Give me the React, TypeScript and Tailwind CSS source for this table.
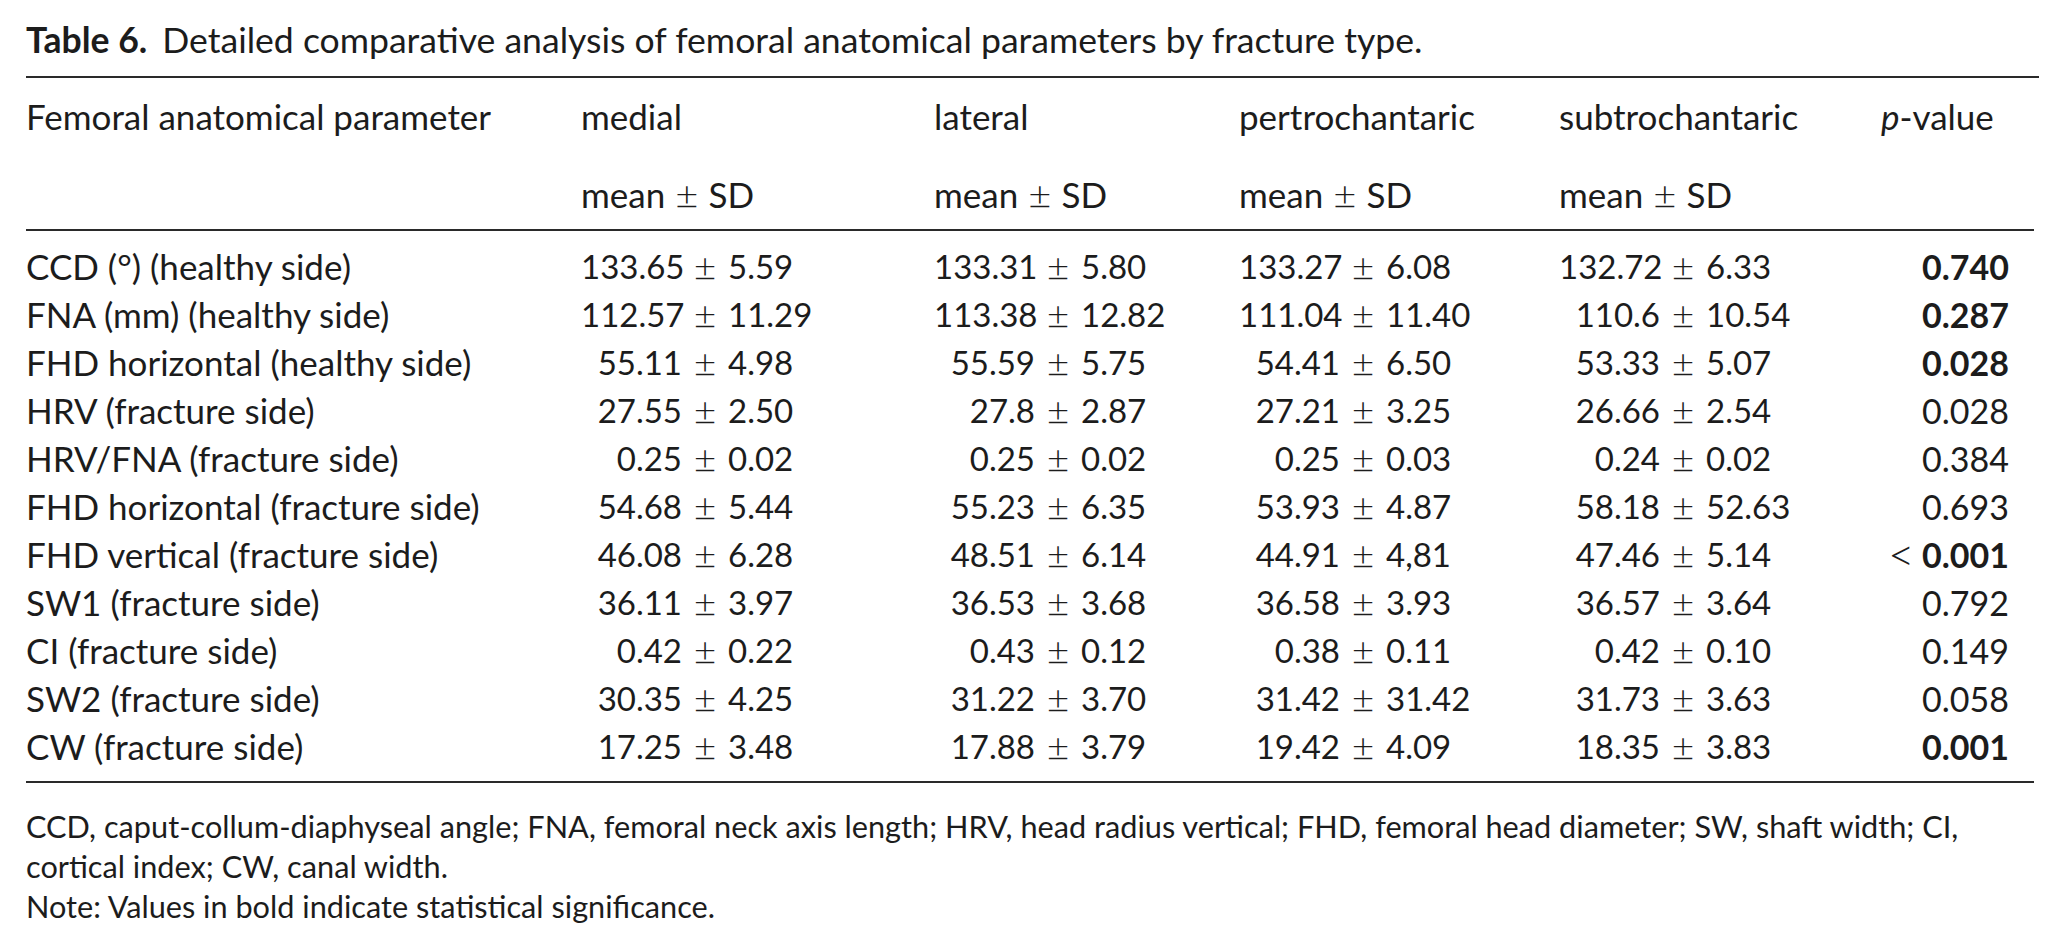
import React from "react";

type Row = {
  label: string;
  vals: [string, string][];
  p: string;
  bold?: boolean;
  lt?: boolean;
};

const rows: Row[] = [
  { label: "CCD (°) (healthy side)", vals: [["133.65", "5.59"], ["133.31", "5.80"], ["133.27", "6.08"], ["132.72", "6.33"]], p: "0.740", bold: true },
  { label: "FNA (mm) (healthy side)", vals: [["112.57", "11.29"], ["113.38", "12.82"], ["111.04", "11.40"], ["110.6", "10.54"]], p: "0.287", bold: true },
  { label: "FHD horizontal (healthy side)", vals: [["55.11", "4.98"], ["55.59", "5.75"], ["54.41", "6.50"], ["53.33", "5.07"]], p: "0.028", bold: true },
  { label: "HRV (fracture side)", vals: [["27.55", "2.50"], ["27.8", "2.87"], ["27.21", "3.25"], ["26.66", "2.54"]], p: "0.028" },
  { label: "HRV/FNA (fracture side)", vals: [["0.25", "0.02"], ["0.25", "0.02"], ["0.25", "0.03"], ["0.24", "0.02"]], p: "0.384" },
  { label: "FHD horizontal (fracture side)", vals: [["54.68", "5.44"], ["55.23", "6.35"], ["53.93", "4.87"], ["58.18", "52.63"]], p: "0.693" },
  { label: "FHD vertical (fracture side)", vals: [["46.08", "6.28"], ["48.51", "6.14"], ["44.91", "4,81"], ["47.46", "5.14"]], p: "0.001", bold: true, lt: true },
  { label: "SW1 (fracture side)", vals: [["36.11", "3.97"], ["36.53", "3.68"], ["36.58", "3.93"], ["36.57", "3.64"]], p: "0.792" },
  { label: "CI (fracture side)", vals: [["0.42", "0.22"], ["0.43", "0.12"], ["0.38", "0.11"], ["0.42", "0.10"]], p: "0.149" },
  { label: "SW2 (fracture side)", vals: [["30.35", "4.25"], ["31.22", "3.70"], ["31.42", "31.42"], ["31.73", "3.63"]], p: "0.058" },
  { label: "CW (fracture side)", vals: [["17.25", "3.48"], ["17.88", "3.79"], ["19.42", "4.09"], ["18.35", "3.83"]], p: "0.001", bold: true },
];

const grid = "grid grid-cols-[555px_353px_305px_320px_322px_158px]";

function Val({ a, b }: { a: string; b: string }) {
  return (
    <div className="flex items-center text-[33px] leading-[48px]">
      <span className="w-[101px] text-right">{a}</span>
      <span className="w-[46px] text-center text-[39px] leading-none font-light">±</span>
      <span>{b}</span>
    </div>
  );
}

export default function App() {
  return (
    <div
      className="w-[2065px] h-[949px] bg-white text-[#1c1c1c] pl-[26px] overflow-hidden"
      style={{ fontFamily: "Lato, 'Open Sans', sans-serif" }}
    >
      <div className="h-[76px] pt-[3px] flex items-center text-[35.6px] whitespace-nowrap">
        <span className="font-bold">Table 6.</span>
        <span className="ml-[15px]">Detailed comparative analysis of femoral anatomical parameters by fracture type.</span>
      </div>
      <div className="w-[2013px] h-[2px] bg-[#2a2a2a]" />
      <div className="w-[2013px] text-[35px]">
        <div className={`${grid} h-[78px] pb-[2px] items-center`}>
          <div>Femoral anatomical parameter</div>
          <div>medial</div>
          <div>lateral</div>
          <div>pertrochantaric</div>
          <div>subtrochantaric</div>
          <div>
            <span className="italic">p</span>-value
          </div>
        </div>
        <div className={`${grid} h-[73px] pt-[3px] items-center`}>
          <div />
          {[0, 1, 2, 3].map((i) => (
            <div key={i} className="flex items-center">
              mean<span className="mx-[10px] text-[40px] leading-none font-light">±</span>SD
            </div>
          ))}
          <div />
        </div>
      </div>
      <div className="w-[2008px] h-[2px] bg-[#2a2a2a]" />
      <div className="pt-[9px] text-[35px]">
        {rows.map((r) => (
          <div key={r.label} className={`${grid} h-[48px] items-center w-[2013px]`}>
            <div className="whitespace-nowrap">{r.label}</div>
            {r.vals.map(([a, b], i) => (
              <div key={i}>
                <Val a={a} b={b} />
              </div>
            ))}
            <div className="pl-[41px] whitespace-nowrap flex items-center text-[34px]">
              {r.lt && (
                <span className="inline-block -ml-[34px] w-[34px] text-[46px] leading-none font-light">&lt;</span>
              )}
              <span className={r.bold ? "font-bold" : ""}>{r.p}</span>
            </div>
          </div>
        ))}
      </div>
      <div className="mt-[13px] w-[2008px] h-[2px] bg-[#2a2a2a]" />
      <div className="mt-[24px] text-[30.7px] leading-[40px] whitespace-nowrap">
        <div>
          CCD, caput-collum-diaphyseal angle; FNA, femoral neck axis length; HRV, head radius vertical; FHD, femoral head diameter; SW, shaft width; CI,
        </div>
        <div>cortical index; CW, canal width.</div>
        <div>Note: Values in bold indicate statistical significance.</div>
      </div>
    </div>
  );
}
